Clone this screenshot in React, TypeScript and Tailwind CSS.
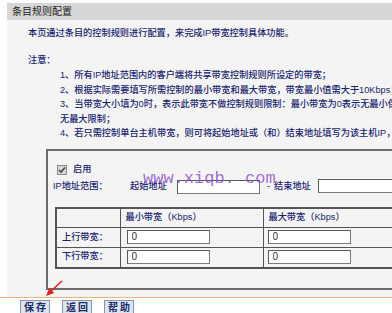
import React from "react";

const notes = [
  "1、所有IP地址范围内的客户端将共享带宽控制规则所设定的带宽；",
  "2、根据实际需要填写所需控制的最小带宽和最大带宽，带宽最小值需大于10Kbps；",
  "3、当带宽大小填为0时，表示此带宽不做控制规则限制：最小带宽为0表示无最小保证，",
  "无最大限制；",
  "4、若只需控制单台主机带宽，则可将起始地址或（和）结束地址填写为该主机IP，",
];

const Field = ({ value = "" }: { value?: string }) => (
  <input
    readOnly
    value={value}
    className="w-[83px] h-[14px] border border-[#7a7a7a] border-t-[#5a5a5a] border-l-[#5a5a5a] bg-white pl-[4px] text-[10px] leading-[12px] text-[#333] outline-none"
  />
);

const App = () => {
  return (
    <div className="relative w-[392px] h-[313px] overflow-hidden bg-white font-['Liberation_Sans','Noto_Sans_CJK_SC',sans-serif] text-[9.2px]">
      <div className="pt-[3px] pl-[7px]">
        <div className="h-[17px] bg-[#d6d6d6] pl-[5px] leading-[17px] text-[10px] text-[#222]">
          条目规则配置
        </div>
      </div>

      <div className="ml-[7px] bg-[#f4f4f4] text-[#17236e] font-medium">
        <div className="pt-[6px] pl-[21px] leading-[15px] whitespace-nowrap">
          本页通过条目的控制规则进行配置，来完成IP带宽控制具体功能。
        </div>
        <div className="mt-[12px] pl-[21px] leading-[15px]">注意：</div>
        <div className="pl-[53px] leading-[14.5px] whitespace-nowrap">
          {notes.map((n) => (
            <div key={n}>{n}</div>
          ))}
        </div>

        <div className="relative mt-[8px] ml-[39px] w-[420px] h-[141px] border-2 border-[#6b6b6b] border-r-0">
          <div className="flex items-center h-[14px] mt-[12px] pl-[9px]">
            <span className="flex items-center justify-center w-[10px] h-[10px] border border-[#8c8c8c] bg-[#d8d8d8]">
              <svg width="8" height="8" viewBox="0 0 8 8">
                <path d="M1 4 L3 6 L7 1.5" fill="none" stroke="#444" strokeWidth="1.6" />
              </svg>
            </span>
            <span className="ml-[6px]">启用</span>
          </div>

          <div className="flex items-center h-[16px] mt-[2px] pl-[5px] whitespace-nowrap">
            <span className="w-[77px]">IP地址范围：</span>
            <span className="w-[47px]">起始地址</span>
            <Field />
            <span className="ml-[7px]">-</span>
            <span className="ml-[4px]">结束地址</span>
            <span className="ml-[7px]">
              <Field />
            </span>
          </div>

          <table className="mt-[12px] ml-[7px] border-collapse border-2 border-[#555]">
            <tbody>
              <tr className="h-[20px]">
                <td className="w-[64px] border border-[#555]"></td>
                <td className="w-[143px] border border-[#555] pl-[5px]">最小带宽（Kbps）</td>
                <td className="w-[143px] border border-[#555] pl-[5px]">最大带宽（Kbps）</td>
              </tr>
              <tr className="h-[20px]">
                <td className="border border-[#555] pl-[5px]">上行带宽：</td>
                <td className="border border-[#555] pl-[6px]">
                  <Field value="0" />
                </td>
                <td className="border border-[#555] pl-[4px]">
                  <Field value="0" />
                </td>
              </tr>
              <tr className="h-[20px]">
                <td className="border border-[#555] pl-[5px]">下行带宽：</td>
                <td className="border border-[#555] pl-[6px]">
                  <Field value="0" />
                </td>
                <td className="border border-[#555] pl-[4px]">
                  <Field value="0" />
                </td>
              </tr>
            </tbody>
          </table>

          <div className="absolute left-[95px] top-[19px] font-['Liberation_Mono',monospace] font-normal text-[17px] leading-[17px] text-[#8a48c8]/80 whitespace-nowrap">
            www.xiqb. com
          </div>
        </div>

        <div className="h-[7px]"></div>
      </div>

      <div className="h-px bg-[#f2b07a]"></div>
      <div className="flex gap-[12px] pt-[2px] pl-[20px]">
        {["保存", "返回", "帮助"].map((b) => (
          <button
            key={b}
            className="w-[30px] h-[16px] border border-[#7f95ad] bg-[#dde5ee] text-[10px] font-bold tracking-[2px] pl-[2px] whitespace-nowrap text-[#1b2b6b] leading-[14px]"
          >
            {b}
          </button>
        ))}
      </div>

      <svg className="absolute left-[40px] top-[278px]" width="26" height="22" viewBox="0 0 26 22">
        <line x1="22" y1="3" x2="11" y2="13" stroke="#e32020" strokeWidth="1.6" />
        <polygon points="6,18 9.4,9.9 14.2,15.1" fill="#e32020" />
      </svg>
    </div>
  );
};

export default App;
